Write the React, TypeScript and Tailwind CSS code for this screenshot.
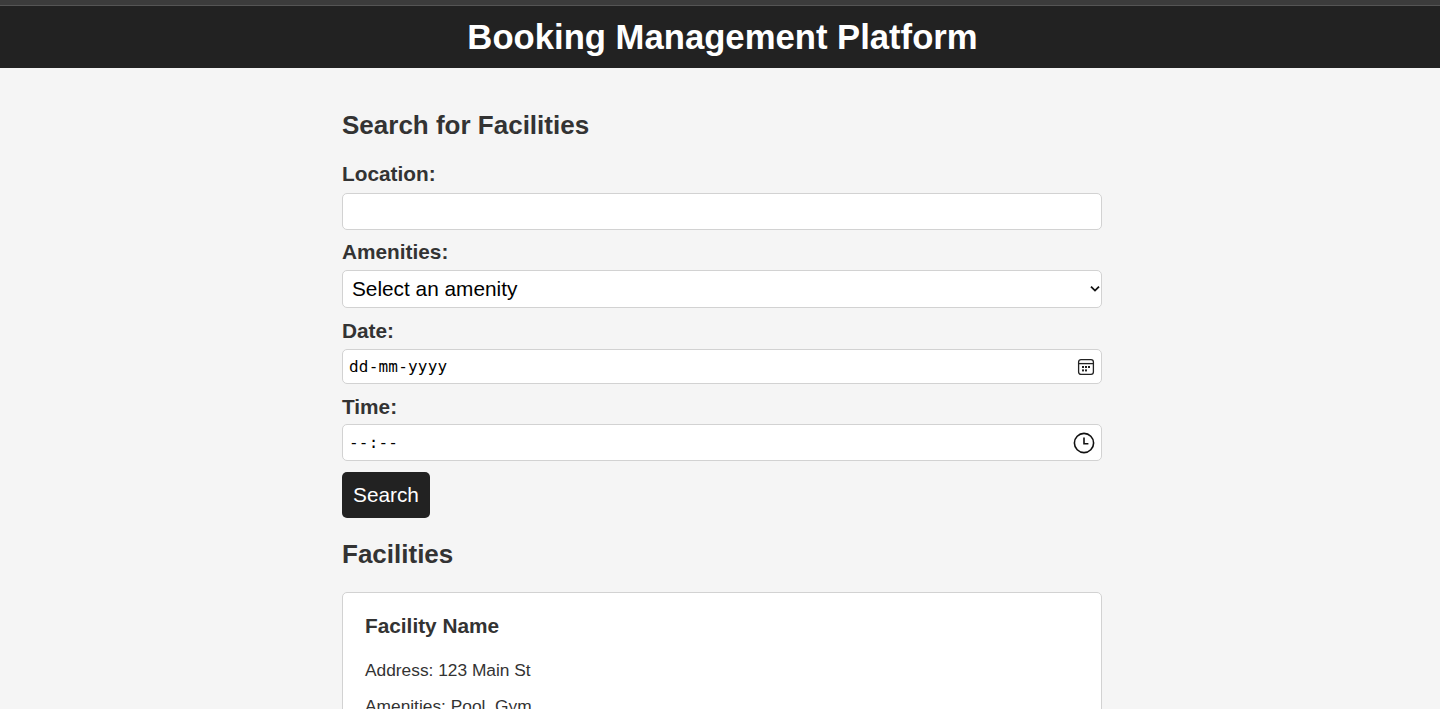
import React from 'react';

const FONT = "font-['Liberation_Sans',Arial,sans-serif]";
const LABEL = "block text-[20.8px] leading-[24px] font-bold";
const FIELD = "flex items-center justify-between w-full bg-white border border-[#d2d2d2] rounded-[5px] text-[16px] text-black tracking-[0.2px] font-['DejaVu_Sans_Mono',monospace]";

const CalendarIcon = () => (
  <svg width="18" height="18" viewBox="0 0 18 18" fill="none" stroke="#222222" strokeWidth="1.3">
    <rect x="1.6" y="1.6" width="14.8" height="14.8" rx="2.4" />
    <path d="M1.6 5.6h14.8" />
    <g fill="#222222" stroke="none">
      <rect x="5" y="8" width="2" height="2" />
      <rect x="8" y="8" width="2" height="2" />
      <rect x="11" y="8" width="2" height="2" />
      <rect x="5" y="11.4" width="2" height="2" />
      <rect x="8" y="11.4" width="2" height="2" />
    </g>
  </svg>
);

const ClockIcon = () => (
  <svg width="22" height="22" viewBox="0 0 22 22" fill="none" stroke="#111111" strokeWidth="1.6">
    <circle cx="11" cy="11" r="9.6" />
    <path d="M11 5.6v6.2h4.4" />
  </svg>
);

const App = () => {
  return (
    <div className={`h-screen overflow-hidden bg-[#f5f5f5] text-[#333333] ${FONT}`}>
      <div className="h-[6px] bg-[#3c3c3c] border-b border-[#555555]" />
      <header className="h-[62px] pl-[5px] bg-[#222222] flex items-center justify-center">
        <h1 className="text-[34.67px] leading-none font-bold text-white">Booking Management Platform</h1>
      </header>

      <div className="pl-[4px]">
        <main className="w-[760px] mx-auto pt-[41px]">
          <h2 className="text-[26px] leading-[32px] font-bold">Search for Facilities</h2>

          <form className="mt-[21px]">
            <label className={LABEL}>Location:</label>
            <input type="text" className="block w-full h-[36.5px] mt-[7px] bg-white border border-[#d2d2d2] rounded-[5px]" />

            <label className={`${LABEL} mt-[10.5px]`}>Amenities:</label>
            <div className="relative mt-[6px]">
              <select className="block w-full h-[38px] pl-[9px] appearance-none bg-white border border-[#d2d2d2] rounded-[5px] text-[20.8px] text-black">
                <option>Select an amenity</option>
              </select>
              <svg className="absolute right-[2px] top-[15px]" width="10" height="8" viewBox="0 0 10 8" fill="none" stroke="#111111" strokeWidth="1.8">
                <path d="M1 1.6 5 5.6l4-4" />
              </svg>
            </div>

            <label className={`${LABEL} mt-[11px]`}>Date:</label>
            <div className={`${FIELD} h-[35px] mt-[6px] pl-[6px] pr-[6px]`}>
              <span>dd-mm-yyyy</span>
              <CalendarIcon />
            </div>

            <label className={`${LABEL} mt-[11px]`}>Time:</label>
            <div className={`${FIELD} h-[37px] mt-[5px] pl-[6px] pr-[6px]`}>
              <span>--:--</span>
              <ClockIcon />
            </div>

            <button type="button" className="block h-[46px] w-[88px] mt-[11px] bg-[#222222] text-white text-[20.8px] rounded-[5px]">Search</button>
          </form>

          <h2 className="text-[26px] leading-[32px] font-bold mt-[20px]">Facilities</h2>

          <section className="mt-[22px] bg-white border border-[#d2d2d2] rounded-[5px] px-[22px] pt-[20px] pb-[20px]">
            <h3 className="text-[20.8px] leading-[26px] font-bold">Facility Name</h3>
            <p className="text-[17.33px] leading-[20px] mt-[21px]">Address: 123 Main St</p>
            <p className="text-[17.33px] leading-[20px] mt-[16px]">Amenities: Pool, Gym</p>
          </section>
        </main>
      </div>
    </div>
  );
};

export default App;
